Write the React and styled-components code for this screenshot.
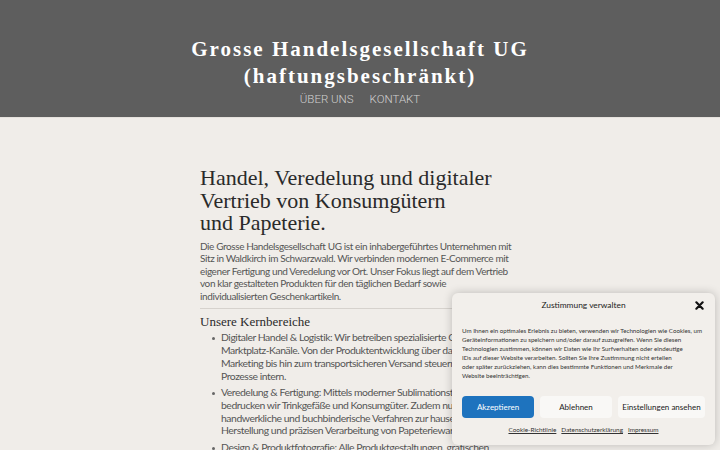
import React from "react";
import styled, { createGlobalStyle } from "styled-components";

const Global = createGlobalStyle`
  html, body { margin: 0; padding: 0; }
  body { background: #f0ede9; overflow: hidden; width: 720px; height: 450px; }
  * { box-sizing: border-box; }
`;

const Page = styled.div`
  width: 720px;
  height: 450px;
  position: relative;
  overflow: hidden;
  background: #f0ede9;
`;

const Header = styled.header`
  height: 118px;
  background: #5e5e5e;
  display: flex;
  flex-direction: column;
  align-items: center;
  padding-top: 36px;
  border-bottom: 1px solid #e6e2dd;
`;

const SiteTitle = styled.h1`
  margin: 0;
  font-family: "Liberation Serif", "DejaVu Serif", serif;
  font-weight: 700;
  font-size: 21px;
  line-height: 27px;
  letter-spacing: 2px;
  color: #ffffff;
  text-align: center;
`;

const Nav = styled.nav`
  display: flex;
  gap: 16px;
  margin-top: 2px;
`;

const NavLink = styled.span`
  font-family: "Roboto", "Liberation Sans", sans-serif;
  font-weight: 300;
  font-size: 11.5px;
  color: #d0d0d0;
`;

const Main = styled.main`
  width: 320px;
  margin: 0 0 0 200px;
  padding-top: 49px;
`;

const Heading = styled.h2`
  margin: 0;
  font-family: "Liberation Serif", "DejaVu Serif", serif;
  font-weight: 400;
  font-size: 22px;
  line-height: 22.5px;
  color: #2a2a2a;
`;

const Lead = styled.p`
  margin: 5px 0 0;
  font-family: "Lato", "Liberation Sans", sans-serif;
  font-size: 10px;
  letter-spacing: -0.4px;
  line-height: 12.6px;
  color: #555;
  white-space: nowrap;
`;

const Rule = styled.hr`
  border: none;
  border-top: 1px solid #d6d2cd;
  margin: 6px 0 0;
  width: 316px;
`;

const SubHeading = styled.h3`
  margin: 5px 0 0;
  font-family: "Liberation Serif", "DejaVu Serif", serif;
  font-weight: 400;
  font-size: 13px;
  line-height: 16px;
  color: #2a2a2a;
`;

const List = styled.ul`
  margin: 1px 0 0;
  padding-left: 21px;
  list-style: none;
`;

const Item = styled.li`
  position: relative;
  font-family: "Lato", "Liberation Sans", sans-serif;
  font-size: 10.4px;
  letter-spacing: -0.45px;
  line-height: 12.7px;
  color: #555;
  margin-bottom: 4px;
  white-space: nowrap;
  &::before {
    content: "";
    position: absolute;
    left: -9px;
    top: 5.5px;
    width: 3px;
    height: 3px;
    border-radius: 50%;
    background: #666;
  }
`;

const Banner = styled.div`
  position: absolute;
  left: 452px;
  top: 293px;
  width: 263px;
  height: 152px;
  background: #f2efeb;
  border-radius: 6px;
  box-shadow: 0 0 10px rgba(0, 0, 0, 0.22);
  padding: 5px 10px 0;
  display: flex;
  flex-direction: column;
  font-family: "Lato", "Liberation Sans", sans-serif;
  color: #222;
`;

const BannerHead = styled.div`
  position: relative;
  display: flex;
  justify-content: center;
  align-items: center;
  height: 14px;
`;

const BannerTitle = styled.div`
  font-size: 8.4px;
  color: #222;
`;

const Close = styled.span`
  position: absolute;
  right: 0;
  top: 1px;
  width: 12px;
  height: 12px;
  display: flex;
  align-items: center;
  justify-content: center;
`;

const BannerText = styled.p`
  margin: 14px 0 0;
  font-size: 6.2px;
  line-height: 9px;
  color: #333;
  white-space: nowrap;
`;

const Buttons = styled.div`
  display: flex;
  gap: 6px;
  margin-top: 16px;
`;

const Btn = styled.button`
  height: 22px;
  border: none;
  border-radius: 4px;
  font-family: "Lato", "Liberation Sans", sans-serif;
  font-size: 8px;
  padding: 0;
  width: ${(p) => p.$w}px;
  background: ${(p) => (p.$primary ? "#1e73be" : "#f9f8f6")};
  color: ${(p) => (p.$primary ? "#ffffff" : "#222")};
`;

const Links = styled.div`
  display: flex;
  justify-content: center;
  gap: 5px;
  margin-top: 8px;
`;

const LinkTxt = styled.a`
  font-size: 6.4px;
  color: #333;
  text-decoration: underline;
`;

export default function App() {
  return (
    <Page>
      <Global />
      <Header>
        <SiteTitle>
          Grosse Handelsgesellschaft UG
          <br />
          (haftungsbeschränkt)
        </SiteTitle>
        <Nav>
          <NavLink>ÜBER UNS</NavLink>
          <NavLink>KONTAKT</NavLink>
        </Nav>
      </Header>
      <Main>
        <Heading>
          Handel, Veredelung und digitaler
          <br />
          Vertrieb von Konsumgütern
          <br />
          und Papeterie.
        </Heading>
        <Lead>
          Die Grosse Handelsgesellschaft UG ist ein inhabergeführtes Unternehmen mit
          <br />
          Sitz in Waldkirch im Schwarzwald. Wir verbinden modernen E-Commerce mit
          <br />
          eigener Fertigung und Veredelung vor Ort. Unser Fokus liegt auf dem Vertrieb
          <br />
          von klar gestalteten Produkten für den täglichen Bedarf sowie
          <br />
          individualisierten Geschenkartikeln.
        </Lead>
        <Rule />
        <SubHeading>Unsere Kernbereiche</SubHeading>
        <List>
          <Item>
            Digitaler Handel &amp; Logistik: Wir betreiben spezialisierte Online-Shops und
            <br />
            Marktplatz-Kanäle. Von der Produktentwicklung über das Design und
            <br />
            Marketing bis hin zum transportsicheren Versand steuern wir alle
            <br />
            Prozesse intern.
          </Item>
          <Item>
            Veredelung &amp; Fertigung: Mittels moderner Sublimationstechnik
            <br />
            bedrucken wir Trinkgefäße und Konsumgüter. Zudem nutzen wir
            <br />
            handwerkliche und buchbinderische Verfahren zur hauseigenen
            <br />
            Herstellung und präzisen Verarbeitung von Papeteriewaren.
          </Item>
          <Item>
            Design &amp; Produktfotografie: Alle Produktgestaltungen, grafischen
            <br />
            Entwürfe und Fotografien entstehen in unserem Haus.
          </Item>
        </List>
      </Main>
      <Banner>
        <BannerHead>
          <BannerTitle>Zustimmung verwalten</BannerTitle>
          <Close>
            <svg width="9" height="9" viewBox="0 0 10 10">
              <path d="M1.5 1.5 L8.5 8.5 M8.5 1.5 L1.5 8.5" stroke="#111" strokeWidth="2.4" strokeLinecap="round" />
            </svg>
          </Close>
        </BannerHead>
        <BannerText>
          Um Ihnen ein optimales Erlebnis zu bieten, verwenden wir Technologien wie Cookies, um
          <br />
          Geräteinformationen zu speichern und/oder darauf zuzugreifen. Wenn Sie diesen
          <br />
          Technologien zustimmen, können wir Daten wie Ihr Surfverhalten oder eindeutige
          <br />
          IDs auf dieser Website verarbeiten. Sollten Sie Ihre Zustimmung nicht erteilen
          <br />
          oder später zurückziehen, kann dies bestimmte Funktionen und Merkmale der
          <br />
          Website beeinträchtigen.
        </BannerText>
        <Buttons>
          <Btn $primary $w={72}>Akzeptieren</Btn>
          <Btn $w={72}>Ablehnen</Btn>
          <Btn $w={87}>Einstellungen ansehen</Btn>
        </Buttons>
        <Links>
          <LinkTxt>Cookie-Richtlinie</LinkTxt>
          <LinkTxt>Datenschutzerklärung</LinkTxt>
          <LinkTxt>Impressum</LinkTxt>
        </Links>
      </Banner>
    </Page>
  );
}
